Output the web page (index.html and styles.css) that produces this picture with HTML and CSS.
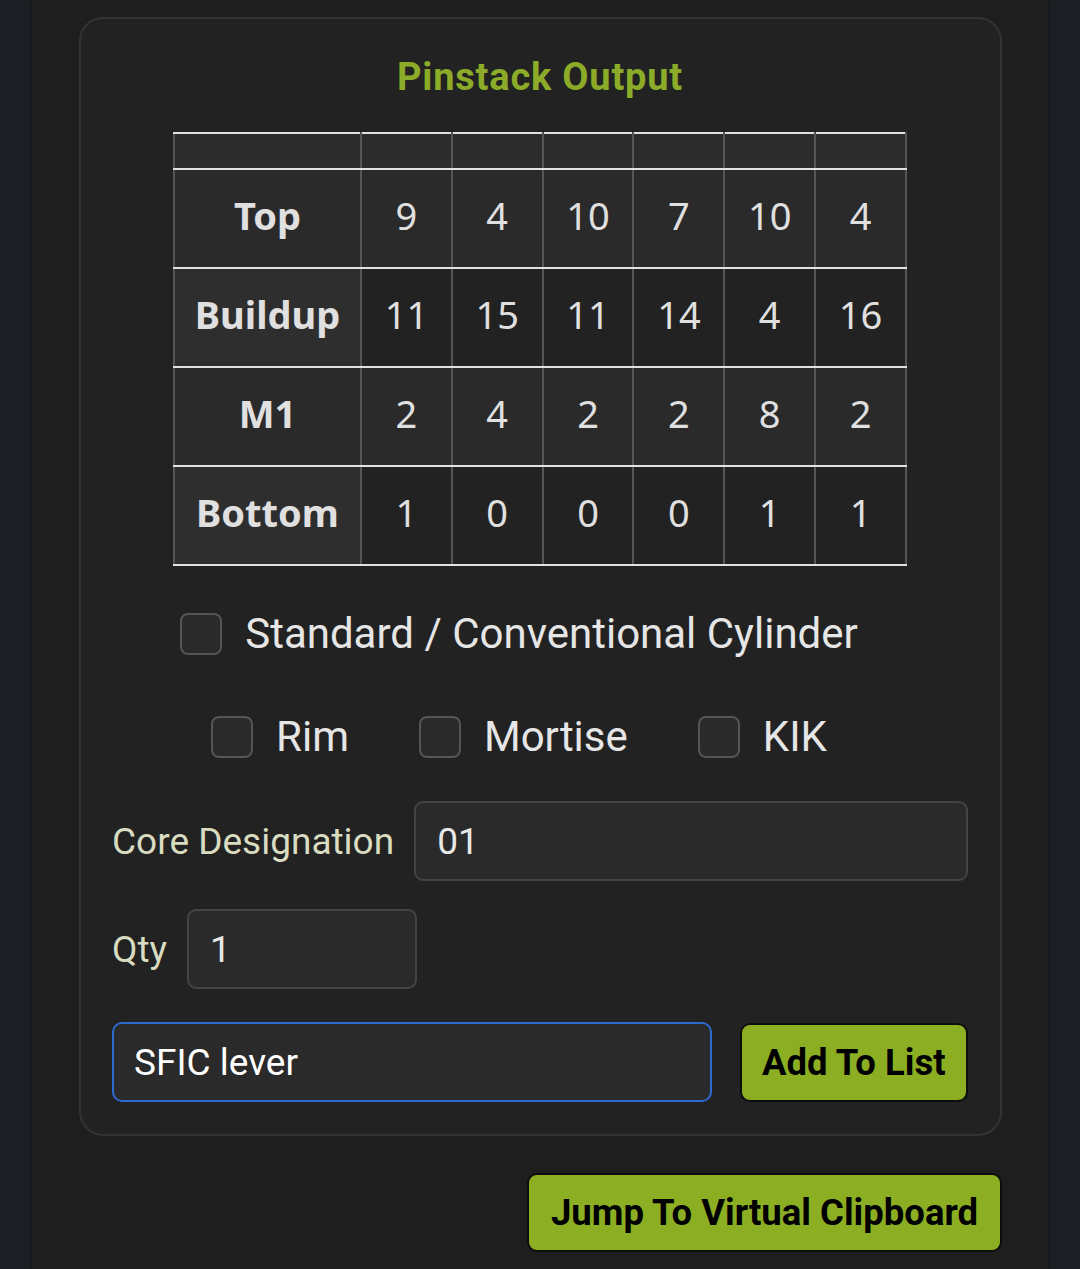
FILE: index.html
```html
<!DOCTYPE html>
<html lang="en">
<head>
<meta charset="utf-8">
<title>Pinstack Output</title>
<link rel="stylesheet" href="styles.css">
</head>
<body>
<div class="page">
  <section class="card">
    <h2 class="title">Pinstack Output</h2>
    <table class="pins">
      <thead>
        <tr><th></th><th></th><th></th><th></th><th></th><th></th><th></th></tr>
      </thead>
      <tbody>
        <tr><th>Top</th><td>9</td><td>4</td><td>10</td><td>7</td><td>10</td><td>4</td></tr>
        <tr><th>Buildup</th><td>11</td><td>15</td><td>11</td><td>14</td><td>4</td><td>16</td></tr>
        <tr><th>M1</th><td>2</td><td>4</td><td>2</td><td>2</td><td>8</td><td>2</td></tr>
        <tr><th>Bottom</th><td>1</td><td>0</td><td>0</td><td>0</td><td>1</td><td>1</td></tr>
      </tbody>
    </table>
    <div class="checks first">
      <label class="check"><span class="box"></span><span>Standard / Conventional Cylinder</span></label>
    </div>
    <div class="checks second">
      <label class="check"><span class="box"></span><span>Rim</span></label>
      <label class="check"><span class="box"></span><span>Mortise</span></label>
      <label class="check"><span class="box"></span><span>KIK</span></label>
    </div>
    <div class="field core">
      <span class="label">Core Designation</span>
      <div class="input grow">01</div>
    </div>
    <div class="field qty">
      <span class="label">Qty</span>
      <div class="input small">1</div>
    </div>
    <div class="field add">
      <div class="input focus">SFIC lever</div>
      <button class="btn add-btn">Add To List</button>
    </div>
  </section>
  <div class="jump-row">
    <button class="btn jump-btn">Jump To Virtual Clipboard</button>
  </div>
</div>
</body>
</html>
```

FILE: styles.css
```css
html, body {
  margin: 0;
  padding: 0;
}
body {
  background: #1c2025;
  font-family: Roboto, "Noto Sans", sans-serif;
  color: #e6e6e6;
  height: 1269px;
  overflow: hidden;
}
.page {
  margin: 0 32px;
  height: 1269px;
  background: #1e1e1e;
  box-shadow: 0 0 4px rgba(0,0,0,0.6);
  padding-top: 17px;
  box-sizing: border-box;
}
.card {
  margin-left: 47px;
  width: 923px;
  box-sizing: border-box;
  border: 2px solid #333;
  border-radius: 24px;
  background: #222222;
  padding: 0 32px 32px 31px;
  display: flex;
  flex-direction: column;
}
.title {
  margin: 38px 0 0;
  text-align: center;
  color: #8bab29;
  font-size: 38px;
  font-weight: 700;
  line-height: 40px;
  letter-spacing: 0.8px;
}
.pins {
  margin: 35px auto 0;
  border-collapse: collapse;
  width: 734px;
  font-family: "Noto Sans", sans-serif;
  font-size: 38px;
  color: #e0e0e0;
  table-layout: fixed;
}
.pins th, .pins td {
  border-top: 2px solid #e2e2e2;
  border-bottom: 2px solid #e2e2e2;
  border-left: 2px solid #555;
  border-right: 2px solid #555;
  text-align: center;
  padding: 0;
  font-weight: 400;
}
.pins tbody th, .pins tbody td {
  padding-bottom: 8px;
}
.pins th:first-child { width: 185px; }
.pins thead th {
  height: 34px;
  background: #2c2c2c;
}
.pins tbody tr { height: 99px; }
.pins tbody th {
  font-weight: 700;
}
.pins tbody tr:nth-child(odd) th,
.pins tbody tr:nth-child(odd) td {
  background: #2a2a2a;
}
.pins tbody tr:nth-child(even) th { background: #2e2e2e; }
.pins tbody tr:nth-child(even) td { background: #222222; }

.checks {
  display: flex;
  justify-content: center;
  padding-right: 42px;
  font-size: 42px;
  color: #e6e6e6;
}
.checks.first { margin-top: 46px; }
.checks.second { margin-top: 59px; gap: 70px; }
.check {
  display: flex;
  align-items: center;
  gap: 23px;
  line-height: 44px;
}
.box {
  width: 38px;
  height: 38px;
  border: 2px solid #555;
  border-radius: 8px;
  background: #2a2a2a;
  flex: none;
}
.field {
  display: flex;
  align-items: center;
}
.label {
  color: #d9dcc0;
  font-size: 37px;
  margin-right: 20px;
}
.input {
  box-sizing: border-box;
  height: 80px;
  border: 2px solid #444;
  border-radius: 9px;
  background: #2a2a2a;
  font-size: 37px;
  color: #e8e8e8;
  display: flex;
  align-items: center;
  padding-left: 21px;
}
.grow { flex: 1; }
.core { margin-top: 42px; }
.qty { margin-top: 28px; }
.small { width: 230px; }
.add { margin-top: 33px; gap: 28px; }
.focus {
  width: 601px;
  border: 2px solid #2c6ad0;
  border-radius: 10px;
  color: #ffffff;
  padding-left: 20px;
}
.btn {
  box-sizing: border-box;
  background: #8cae23;
  border: 2px solid #0d0d0d;
  border-radius: 10px;
  color: #000;
  font-family: Roboto, sans-serif;
  font-weight: 700;
  font-size: 36.5px;
  height: 79px;
  padding: 0;
}
.add-btn { width: 229px; }
.jump-row {
  display: flex;
  justify-content: flex-end;
  width: 970px;
  margin-top: 37px;
}
.jump-btn { width: 475px; }
```
